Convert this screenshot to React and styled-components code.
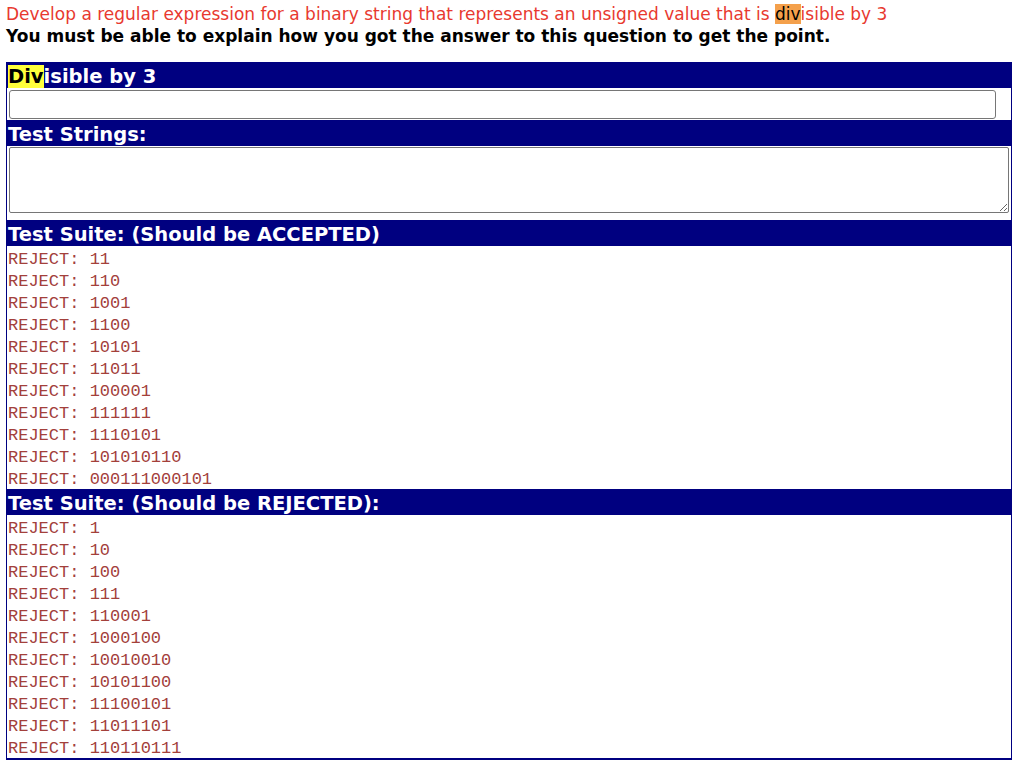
import React from "react";
import styled, { createGlobalStyle } from "styled-components";

const Global = createGlobalStyle`
  html, body { margin: 0; padding: 0; background: #fff; }
  body { font-family: "DejaVu Sans", Verdana, sans-serif; }
`;

const Page = styled.div`
  padding: 4px 12px 0 6px;
`;

const Question = styled.div`
  color: #e8392f;
  font-size: 17px;
  line-height: 21px;
`;

const Note = styled.div`
  color: #000;
  font-size: 17px;
  font-weight: bold;
  line-height: 22px;
`;

const Mark = styled.span`
  background: ${(p) => p.$bg};
  color: #000;
`;

const Panel = styled.div`
  margin-top: 15px;
  border: 1px solid #000080;
  border-top: none;
  border-bottom-width: 2px;
  display: flex;
  flex-direction: column;
`;

const Header = styled.div`
  background: #000080;
  color: #fff;
  font-weight: bold;
  font-size: 19.5px;
  height: 26px;
  line-height: 30px;
  margin: 0 -1px;
  padding-left: 2px;
  white-space: nowrap;
  overflow: hidden;
`;

const InputRow = styled.div`
  padding: 2px 15px 1px 2px;
`;

const TextInput = styled.input`
  display: block;
  box-sizing: border-box;
  width: 100%;
  height: 29px;
  border: 1px solid #767676;
  border-radius: 3px;
  padding: 2px 4px;
  font-size: 14px;
`;

const AreaRow = styled.div`
  padding: 1px 2px 7px 2px;
`;

const TextArea = styled.textarea`
  display: block;
  box-sizing: border-box;
  width: 100%;
  height: 66px;
  border: 1px solid #767676;
  border-radius: 2px;
  resize: vertical;
  font-size: 14px;
`;

const List = styled.div`
  display: flex;
  flex-direction: column;
  padding: 1px 0 0 1px;
`;

const Item = styled.div`
  font-family: "Liberation Mono", "Courier New", monospace;
  font-size: 17px;
  line-height: 25px;
  height: 22px;
  color: #a3403b;
  white-space: pre;
`;

const accepted = ["11", "110", "1001", "1100", "10101", "11011", "100001", "111111", "1110101", "101010110", "000111000101"];
const rejected = ["1", "10", "100", "111", "110001", "1000100", "10010010", "10101100", "11100101", "11011101", "110110111"];

export default function App() {
  return (
    <>
      <Global />
      <Page>
        <Question>
          Develop a regular expression for a binary string that represents an unsigned value that is{" "}
          <Mark $bg="#f4a04b">div</Mark>isible by 3
        </Question>
        <Note>You must be able to explain how you got the answer to this question to get the point.</Note>
        <Panel>
          <Header>
            <Mark $bg="#ffff3c">Div</Mark>isible by 3
          </Header>
          <InputRow>
            <TextInput type="text" />
          </InputRow>
          <Header>Test Strings:</Header>
          <AreaRow>
            <TextArea />
          </AreaRow>
          <Header>Test Suite: (Should be ACCEPTED)</Header>
          <List>
            {accepted.map((s) => (
              <Item key={s}>REJECT: {s}</Item>
            ))}
          </List>
          <Header>Test Suite: (Should be REJECTED):</Header>
          <List>
            {rejected.map((s) => (
              <Item key={s}>REJECT: {s}</Item>
            ))}
          </List>
        </Panel>
      </Page>
    </>
  );
}
